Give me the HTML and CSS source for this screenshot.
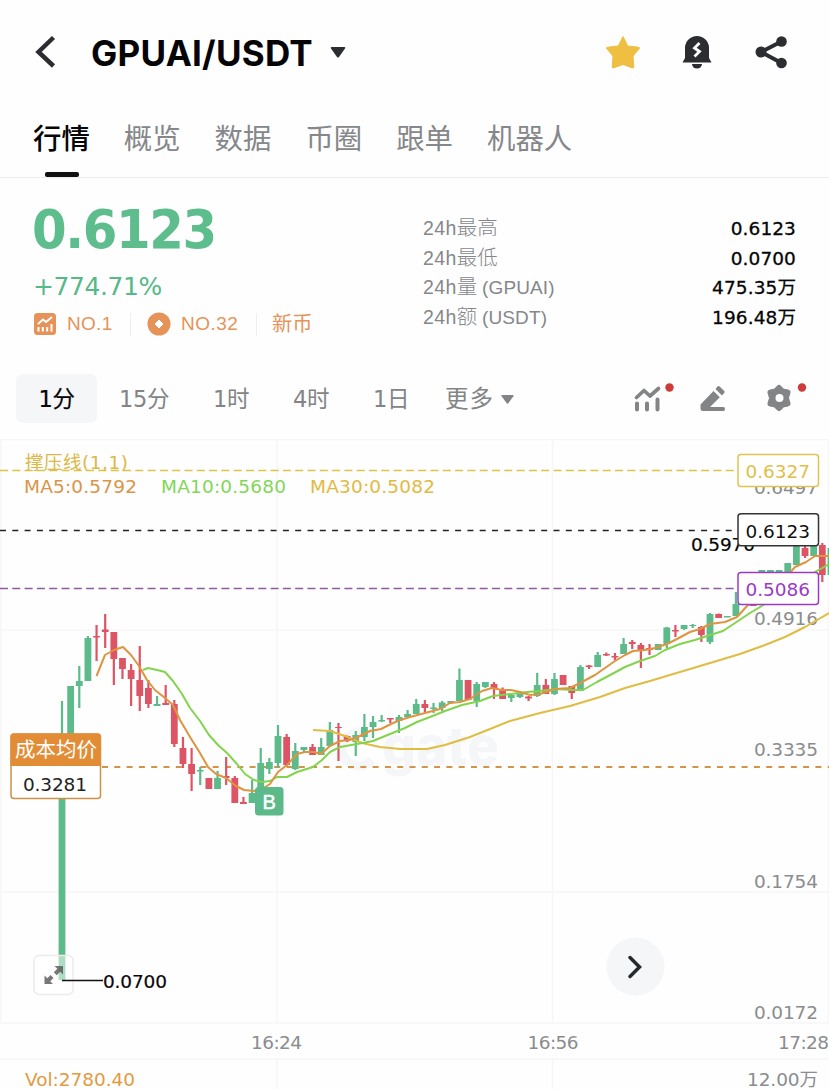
FILE: index.html
```html
<!DOCTYPE html>
<html lang="zh-CN">
<head>
<meta charset="utf-8">
<title>GPUAI/USDT</title>
<link rel="stylesheet" href="styles.css">
</head>
<body>
<header class="header">
  <svg class="back" width="24" height="34" viewBox="0 0 24 34"><path d="M19.500 2.500 4.500 17 19.500 31" fill="none" stroke="#2b2d31" stroke-width="4.500"/></svg>
  <h1 class="pair">GPUAI/USDT</h1>
  <svg class="caret" width="16" height="11" viewBox="0 0 16 11"><path d="M1.500 0h13q1.500 0 .5 1.500L9 10q-1 1-2 0L1 1.500Q0 0 1.500 0z" fill="#2b2d31"/></svg>
  <div class="actions">
    <svg width="36" height="34" viewBox="0 0 36 34"><path d="M18 1.500 22.700 11 34 12.300q1 .5.400 1.200L28 21l.8 11q-.1 1.300-1.500.9L18 29.500l-9.300 3.400q-1.400.4-1.500-.9L8 21l-6.400-7.500q-.6-.7.400-1.200L13.300 11z" fill="#efbf42" stroke="#efbf42" stroke-linejoin="round"/></svg>
    <svg width="30" height="34" viewBox="0 0 30 34"><path d="M3 23V13a12 12 0 0 1 24 0v10l2.500 4.500H.5z" fill="#2b2d31"/><path d="M10 29h10a5 4.600 0 0 1-10 0z" fill="#2b2d31"/><path d="m17.500 8-5 5 5 3.500-5 5" fill="none" stroke="#fff" stroke-width="2.800"/></svg>
    <svg width="32" height="34" viewBox="0 0 32 34"><path d="M26.500 6.500 6 17l20.500 11" fill="none" stroke="#2b2d31" stroke-width="4"/><g fill="#2b2d31"><circle cx="26.500" cy="6.500" r="5.300"/><circle cx="6" cy="17" r="5.500"/><circle cx="26.500" cy="28" r="5.300"/></g></svg>
  </div>
</header>
<nav class="tabs">
  <a class="tab tab-active">行情</a><a class="tab">概览</a><a class="tab">数据</a><a class="tab">币圈</a><a class="tab">跟单</a><a class="tab">机器人</a>
</nav>
<section class="summary">
  <div class="quote">
    <div class="price">0.6123</div>
    <div class="change">+774.71%</div>
    <div class="tags">
      <svg width="22" height="22" viewBox="0 0 22 22"><rect width="22" height="22" rx="3.500" fill="#e6935a"/><path d="m4 11 5-4.500 3 2.500 6-5M4.500 14v4.500M8.800 14v4.500M13.200 14v4.500M17.500 11v7.500" fill="none" stroke="#fff" stroke-width="2"/></svg>
      <span class="tag tag-one">NO.1</span><i class="sep"></i>
      <svg class="coin" width="24" height="24" viewBox="0 0 24 24"><circle cx="12" cy="12" r="11.500" fill="#e6935a"/><path d="m12 8 4 4-4 4-4-4z" fill="#fff" stroke="#fff" stroke-linejoin="round"/></svg>
      <span class="tag tag-rank">NO.32</span><i class="sep"></i><span class="tag tag-new">新币</span>
    </div>
  </div>
  <dl class="stats">
    <div class="stat"><dt>24h<span class="han">最高</span></dt><dd>0.6123</dd></div>
    <div class="stat"><dt>24h<span class="han">最低</span></dt><dd>0.0700</dd></div>
    <div class="stat"><dt>24h<span class="han">量</span> <span class="unit">(GPUAI)</span></dt><dd>475.35万</dd></div>
    <div class="stat"><dt>24h<span class="han">额</span> <span class="unit">(USDT)</span></dt><dd>196.48万</dd></div>
  </dl>
</section>
<div class="periods">
  <span class="period period-active">1分</span><span class="period p15">15分</span><span class="period p1h">1时</span><span class="period p4h">4时</span><span class="period p1d">1日</span>
  <span class="period more">更多<svg width="13" height="9" viewBox="0 0 13 9"><path d="M1 0h11q1 .3.400 1.200L7.300 8.300q-.8.700-1.600 0L.6 1.200Q0 .3 1 0z" fill="#828486"/></svg></span>
  <div class="tools">
    <svg width="42" height="32" viewBox="0 0 42 32"><path d="m4.500 15.500 7.500-7 6 5.500 8.500-7.500" fill="none" stroke="#828486" stroke-width="3.700" stroke-linecap="round" stroke-linejoin="round"/><path d="M5 21.500v6M15 21.500v6M25.500 17.500v10" fill="none" stroke="#828486" stroke-width="4" stroke-linecap="round"/><circle cx="37.500" cy="5.500" r="4.200" fill="#cf3b3b"/></svg>
    <svg class="pencil" width="28" height="32" viewBox="0 0 28 32"><path d="m14.500 9 6.300 6.300L11 25h13.500q1.500 0 1.500 2t-1.500 2H4q-2.500 0-2.500-2.500v-4zM16.500 7 18.500 4.500q1-1 2.200 0l4.500 4.400q1 1 0 2.200l-2.300 2.300z" fill="#828486"/></svg>
    <svg class="gear" width="42" height="32" viewBox="0 0 42 32"><path d="M14 6 17.500 9.500 22.500 10.500 20.800 16 22.500 21.500 17.500 22.500 14 26 10.500 22.500 5.500 21.500 7.200 16 5.500 10.500 10.500 9.500z" fill="#828486" stroke="#828486" stroke-width="6" stroke-linejoin="round"/><circle cx="14.500" cy="16" r="4" fill="#fff"/><circle cx="37" cy="5.500" r="4.200" fill="#cf3b3b"/></svg>
  </div>
</div>
<svg class="chart" id="chart" width="829" height="650" viewBox="0 439 829 650">
  <g class="grid"><path d="M0 439.500H829M0 630H829M0 892H829M0 1023H829M0 1059H829M1 439V1023M277 439V1023M552.500 439V1023M828.500 439V1023M277 1059V1089M552.500 1059V1089"/></g>
  <g class="watermark"><path d="M372 738a17 17 0 1 0 0 22" fill="none" stroke="#f5f6f8" stroke-width="9"/><text x="382" y="765" textLength="117" lengthAdjust="spacingAndGlyphs">gate</text></g>
  <g class="axis">
    <text x="754" y="494" textLength="64">0.6497</text>
    <text x="754" y="625" textLength="64">0.4916</text>
    <text x="754" y="756" textLength="64">0.3335</text>
    <text x="754" y="887.500" textLength="64">0.1754</text>
    <text x="754" y="1018.500" textLength="64">0.0172</text>
    <text x="251" y="1048.500" textLength="51">16:24</text>
    <text x="527.500" y="1048.500" textLength="51">16:56</text>
    <text x="778" y="1048.500" textLength="51">17:28</text>
    <text x="747" y="1086" textLength="71">12.00万</text>
  </g>
  <path class="level" d="M0 470.500H738" stroke="#dcc34a"/>
  <path class="level level-last" d="M0 530.500H738" stroke="#222"/>
  <path class="level" d="M0 588.500H738" stroke="#8d5d9c"/>
  <path class="level cost" d="M102 767H829" stroke="#d49447"/>
  <g id="candles"></g>
  <g class="averages"><polyline id="ma30" stroke="#e0bc43"/><polyline id="ma10" stroke="#83d44d"/><polyline id="ma5" stroke="#df9440"/></g>
  <text class="strong" x="691" y="551" textLength="64">0.5970</text>
  <g class="legend">
    <text x="25" y="468.500" textLength="103" fill="#dcb846">撑压线(1,1)</text>
    <text x="24" y="493" textLength="113" fill="#dc9448">MA5:0.5792</text>
    <text x="161" y="493" textLength="125" fill="#82d758">MA10:0.5680</text>
    <text x="310" y="493" textLength="125" fill="#e2ba43">MA30:0.5082</text>
    <text x="25" y="1085.500" textLength="110" fill="#e29a43">Vol:2780.40</text>
  </g>
  <g class="pricebox">
    <rect x="738" y="454.500" width="80.500" height="32" rx="3" stroke="#dfc452"/><text x="745.500" y="478" textLength="64.500" fill="#dfbf49">0.6327</text>
    <rect x="738" y="513.700" width="80.500" height="32" rx="3" stroke="#333"/><text x="745.500" y="537.500" textLength="64.500" fill="#111">0.6123</text>
    <rect x="738" y="572.500" width="80.500" height="32" rx="3" stroke="#9a3bc5"/><text x="745.500" y="596" textLength="64.500" fill="#9a3bc5">0.5086</text>
  </g>
  <g class="costbox">
    <rect x="11" y="734" width="89.500" height="64.500" rx="3" fill="#fff" stroke="#cd9148" stroke-width="1.500"/><path d="M10.500 766v-29q0-3.500 3.500-3.500h83.500q3.500 0 3.500 3.500v29z" fill="#e28d36"/>
    <text class="costtitle" x="15" y="757" textLength="82">成本均价</text><text x="23" y="790.500" textLength="64" fill="#222">0.3281</text>
  </g>
  <rect x="255" y="787" width="28.500" height="28.500" rx="3.500" fill="#5cb98a"/><text class="buy" x="262.500" y="808.500">B</text>
  <rect x="34" y="955.500" width="39" height="39" rx="5" fill="#fff" fill-opacity=".5" stroke="#ebebeb" stroke-width="1.500"/>
  <path d="M62 980.500H103" stroke="#111" stroke-width="1.500"/>
  <path d="M54.500 966H63v8.500l-2.800-2.800-3.500 3.500-2.900-2.900 3.500-3.500zM44.500 984v-8.500l2.800 2.800 3.300-3.300 2.900 2.900-3.300 3.300 2.800 2.800z" fill="#555" fill-opacity=".8"/>
  <text class="strong" x="103" y="988" textLength="64">0.0700</text>
  <circle cx="635.500" cy="966.500" r="29" fill="#f4f6f8"/><path d="m630 957.500 9.500 9.500-9.500 9.500" fill="none" stroke="#25282c" stroke-width="3.500" stroke-linecap="round"/>
</svg>
<script src="chart.js"></script>
</body>
</html>
```
FILE: styles.css
```css
* { box-sizing: border-box; }
body { margin: 0; width: 829px; height: 1089px; overflow: hidden; background: #fefefe; font-family: "DejaVu Sans", "Noto Sans CJK SC", sans-serif; color: #050505; }
svg { display: block; flex: none; }
.header { height: 104px; display: flex; align-items: center; padding: 0 42px 0 34px; }
.pair { margin: 0 18px 0 33px; width: 221px; font: 700 35px/44px Inter, sans-serif; letter-spacing: .25px; white-space: nowrap; padding-top: 1px; }
.actions { margin-left: auto; display: flex; gap: 42px; }
.actions svg:nth-child(2) { margin: 0 1px 0 -1px; }
.tabs { height: 74px; display: flex; gap: 34px; padding: 12px 33px 0; border-bottom: 1.500px solid #ededee; }
.tab { position: relative; font: 400 28.400px/42px "Noto Sans CJK SC", sans-serif; color: #85878a; white-space: nowrap; height: 60px; }
.tab-active { font-weight: 500; color: #050505; }
.tab-active::after { content: ""; position: absolute; left: 12px; top: 56px; width: 34px; height: 5px; background: #111; border-radius: 2px; }
.summary { height: 194px; display: flex; justify-content: space-between; padding: 24px 33px 0 34px; }
.price { width: 210px; font: 700 53px/56px "DejaVu Sans", sans-serif; color: #5dbd8c; letter-spacing: -1.500px; margin-left: -2px; transform: scaleX(.94); transform-origin: left; white-space: nowrap; }
.change { font-size: 25px; line-height: 32px; letter-spacing: -.4px; color: #55b988; margin-top: 13px; margin-left: -1px; }
.tags { display: flex; align-items: center; margin-top: 8px; height: 26px; color: #e6935a; }
.tag { font-size: 19px; line-height: 26px; white-space: nowrap; font-family: "Liberation Sans", "Noto Sans CJK SC", sans-serif; }
.tag-one { margin-left: 11px; width: 46px; letter-spacing: .3px; }
.sep { width: 1px; height: 23px; margin: 0 16px 0 17px; background: #eee; }
.tag-rank { margin-left: 10px; width: 58px; letter-spacing: .5px; }
.tag-rank + .sep { margin-right: 15px; }
.tag-new { font-size: 20.300px; }
.stats { width: 373px; margin: 12px 0 0; }
.stat { height: 29.500px; display: flex; justify-content: space-between; align-items: center; font-size: 18.500px; line-height: 29px; white-space: nowrap; }
.stat dt { color: #85878a; font-family: "Liberation Sans", "Noto Sans CJK SC", sans-serif; font-size: 19.500px; letter-spacing: .4px; }
.han { font-size: 20.500px; font-weight: 300; letter-spacing: 0; line-height: 20px; }
.unit { font-size: 19px; letter-spacing: .1px; margin-left: -1px; }
.stat dd { margin: 0; -webkit-text-stroke: .3px #050505; letter-spacing: .1px; }
.periods { height: 67px; display: flex; align-items: flex-start; padding: 2px 22px 0 16px; }
.period { font: 400 22.500px/50px "DejaVu Sans", "Noto Sans CJK SC", sans-serif; color: #828486; white-space: nowrap; letter-spacing: -.3px; }
.period-active { width: 81px; height: 49px; border-radius: 7px; background: #f4f6f8; color: #050505; text-align: center; -webkit-text-stroke: .2px #050505; }
.p15 { margin-left: 22px; width: 73px; }
.p1h { margin-left: 21px; width: 58px; }
.p4h { margin-left: 22px; width: 58px; }
.p1d { margin-left: 22px; width: 58px; }
.more { display: flex; align-items: center; gap: 7px; margin-left: 14px; letter-spacing: 1px; font-size: 23.500px; }
.tools { display: flex; margin-left: auto; padding-top: 8px; }
.pencil { margin-left: 25px; }
.gear { margin-left: 38px; }
.chart text { font-family: "DejaVu Sans", "Noto Sans CJK SC", sans-serif; font-size: 18.500px; }
.grid path { fill: none; stroke: #f6f6f7; stroke-width: 1.500; }
.chart .watermark text { font: 800 54px Inter, sans-serif; fill: #f5f6f8; }
.axis { fill: #8a8c8e; }
.level { fill: none; stroke-width: 1.500; stroke-dasharray: 8 4.300; }
.level-last { stroke-dasharray: 6 6.300; }
.cost { stroke-width: 2; stroke-dasharray: 6 6.300; }
.averages polyline { fill: none; stroke-width: 2; stroke-linejoin: round; }
.chart .strong { fill: #080808; stroke: #080808; stroke-width: .2px; }
.pricebox rect { fill: #fff; stroke-width: 1.500; }
.chart .costtitle { fill: #fff; font-size: 20.500px; }
.chart .buy { fill: #fff; stroke: #fff; stroke-width: .5px; font: 20px "Liberation Sans", sans-serif; }
```
FILE: chart.js
```js
// Each candle: direction, high, low, body top, body bottom.
const candles = `g701,980,760,980 g686,740,686,740 g666,708,681,686 g636,681,638,681 r625,661,636,637.500 r614,648,629.500,632 r632,685,632,659 r658,679,658,669
r664,706,670,679 r646,711,680,696 r680,708,688,704 g696,706,704,706 r685,705,703,705 r700,747,704,744 r737,768,748,764 r748,791,764,774
g767,785,770,771.500 r778,789,778,789 g771,789,778,789 r757,785,776,778 r776,803,778,803 r797,804,802,804 g780,803,793,803 g748,803,763,803
g758,774,762,769 g725,768,736,763 r734,766,737,765 g743,770,751,769 g747,752,747,750 r744,755,747,755 g738,755,747,755 g722,747,730,746
r723,761,727,728 r735.500,742,736,740.500 g731,756,735,742 g714,741,727,737 g716,738,722,727 g715,722,720,721.500 r718,723,718,719.500 g715,733,717,721
g710,717,714,717 g699,714,704,714 r700,712,704,708 g703,713,707.500,709 g701,711,702.500,708 g701,704,701,703 g668.500,701,680,701 r680,700,680,700
g682,707,684,701 g682,688,682,687 r682,699,684,689 r687.500,699,689,699 g694,702,695,698 g691,698,692,697 r696,701,696.500,698.500 g673,697,685,696
r679,694,685,694 g673,695,679,694 r675,685,675,685 r686,699,686,693 g665,691,667,691 r665,669,665.500,667 g652,667,655,667 r652.500,656,654,655.500
r653,660,656,657.500 g638,654,644,654 r640,649,642,644 r643,668,645,650 r644,655,648,650 g644,650,644,650 g627,648,627.500,644 r625,637,630,631.500
g625,630,625,629 g624,628,625,626 r626,642,627,635 g613,644,614,642 r613.500,618,614,618 g616,617,616,617.500 g592,616,604,616 g590,604,590,604
r600,606,600,606 g570,580,570,580 g570,573,570,573 g570,573,570,573 g563,573,563,573 g545,565,545,565 r543,558,548,556 g541,556,541,556
r543,582,545,575 g548,575,548,575`.split(/\s+/);

const colors = { g: '#5dbb8b', r: '#dd5564' };
document.getElementById('candles').innerHTML = candles.map((entry, i) => {
  const [high, low, top, bottom] = entry.slice(1).split(',').map(Number);
  const x = 62 + i * 8.640;
  return `<g fill="${colors[entry[0]]}"><rect x="${x - 1.100}" y="${high}" width="2.200" height="${low - high}"/>` +
    `<rect x="${x - 3.400}" y="${top}" width="6.800" height="${bottom - top}"/></g>`;
}).join('');

const averages = {
  ma5: '96.500,676 105,655 114,650 123,647 131,655 139,666 147,680 155,690 165,698 173,705 180,720 190,737 200,753 208,767 216,774 226,778 236,786 244,790 254,791 262,789 270,784 278,772 287,765 297,754 305,752 314,752 321,754 330,746 340,741 350,740 360,736 370,731 381,729 391,724 400,720 410,717 425,713 440,709 450,703 460,702 470,699 482,691 492,688 502,690 511,690 520,692 530,695 540,694 555,689 570,688 582,682 595,675 605,668 615,661 625,655 633,651 645,650 655,648 667,644 677,639 690,632 700,629 710,624 725,622 737,617 748,605 760,598 775,585 788,575 795,567 806,562 815,556 829,556',
  ma10: '143,670 148,668 157,670 165,672 173,681 182,694 190,708 200,721 209,735 218,745 227,753 237,764 245,774 254,780 262,782 270,781 277,777 287,777 297,772 313,767 322,760 330,752 340,747 357,744 373,741 390,734 405,728 417,722 430,717 445,711 462,705 480,701 493,696 511,694 527,692 540,691 557,689 572,690 583,690 597,682 612,674 625,667 640,661 655,656 665,650 680,644 695,640 710,635 723,631 738,621 750,613 765,604 780,594 800,585 815,572 829,564',
  ma30: '313,730 330,731 345,736 362,743 380,747 400,749 427,749 445,745 470,737 490,729 510,721 540,713 570,706 600,697 625,688 650,681 680,672 710,663 740,654 765,645 785,637 805,627 829,613'
};
for (const [id, points] of Object.entries(averages)) {
  document.getElementById(id).setAttribute('points', points);
}
```
